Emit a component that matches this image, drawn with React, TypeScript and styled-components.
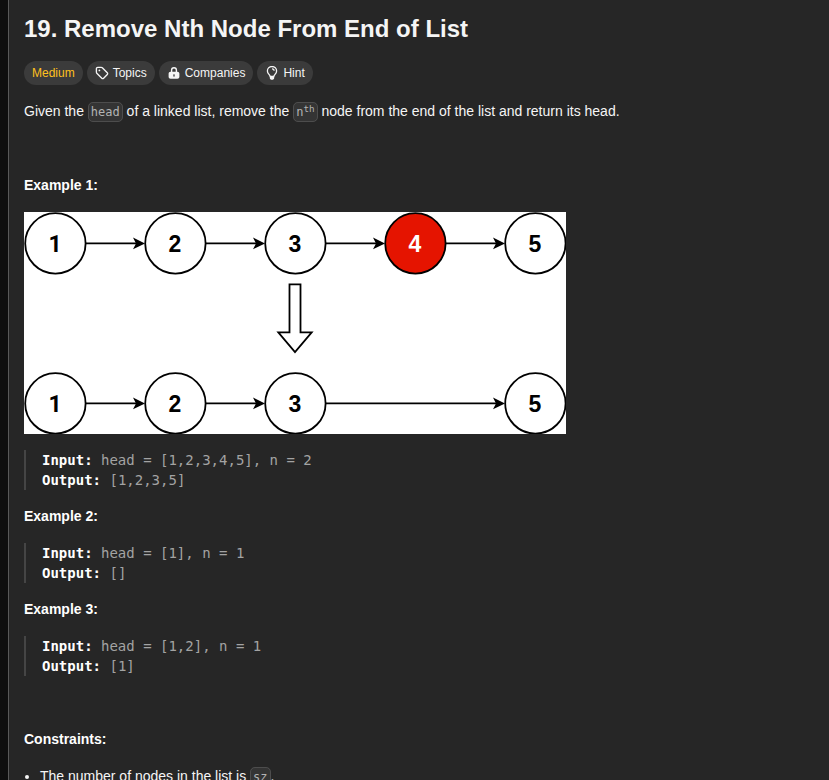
import React from "react";
import styled, { createGlobalStyle } from "styled-components";

const GlobalStyle = createGlobalStyle`
  html, body { margin: 0; height: 100%; overflow: hidden; background: #0f0f0f; }
  *, *::before, *::after { box-sizing: border-box; }
`;

const Page = styled.div`
  display: flex;
  height: 100vh;
  padding-left: 8px;
  overflow: hidden;
  font-family: "Liberation Sans", Arial, sans-serif;
`;

const Panel = styled.main`
  flex: 1;
  min-width: 0;
  overflow: hidden;
  padding: 13px 16px 0 15px;
  border-left: 1px solid #5a5a5a;
  background: #262626;
  color: #f5f5f5;
`;

const Title = styled.h1`
  margin: 0;
  font-size: 24px;
  line-height: 32px;
  font-weight: 700;
`;

const Tags = styled.div`
  display: flex;
  gap: 4px;
  margin-top: 16px;
`;

const Tag = styled.span<{ $color?: string }>`
  display: inline-flex;
  align-items: center;
  gap: 4px;
  height: 24px;
  padding: 0 8px;
  border-radius: 12px;
  background: #3b3b3b;
  color: ${(p) => p.$color ?? "#f5f5f5"};
  font-size: 12px;
  line-height: 16px;
  white-space: nowrap;
`;

const TagIcon = styled.svg`
  width: 14px;
  height: 14px;
  flex: none;
`;

const Paragraph = styled.p`
  margin: 16px 0 0;
  font-size: 14px;
  line-height: 21px;
`;

const Code = styled.code`
  padding: 2px;
  margin: 0;
  border: 1px solid #4d4d4d;
  border-radius: 5px;
  background: #343434;
  color: #b3b3b3;
  font-family: "DejaVu Sans Mono", monospace;
  font-size: 12px;
  line-height: 16px;

  sup {
    position: relative;
    top: -0.42em;
    font-size: 9.3px;
    line-height: 0;
    vertical-align: baseline;
  }
`;

const Heading = styled.p<{ $top: number }>`
  margin: ${(p) => p.$top}px 0 0;
  font-size: 14px;
  line-height: 21px;
  font-weight: 700;
  color: #fff;
`;

const Diagram = styled.svg`
  display: block;
  width: 542px;
  height: 222px;
  margin-top: 16px;
  background: #fff;
`;

const Digit = styled.text<{ $slim: boolean }>`
  font-family: ${(p) => (p.$slim ? "Roboto" : '"Liberation Sans"')}, sans-serif;
  font-size: 23px;
  font-weight: 700;
  text-anchor: middle;
`;

const Sample = styled.pre`
  margin: 16px 0 0;
  padding-left: 16px;
  border-left: 2px solid #454545;
  color: #a3a3a3;
  font-family: "DejaVu Sans Mono", monospace;
  font-size: 14px;
  line-height: 20px;

  strong { color: #fff; }
`;

const List = styled.ul`
  margin: 16px 0 0;
  padding-left: 16px;
  font-size: 14px;
  line-height: 21px;
`;

const ROW_TOP = 31.4;
const ROW_BOTTOM = 191.4;

function ListNode({ x, y, label, removed = false }: { x: number; y: number; label: string; removed?: boolean }) {
  return (
    <g>
      <circle cx={x} cy={y} r={30.2} fill={removed ? "#e51400" : "#fff"} stroke="#000" strokeWidth={1.8} />
      <Digit $slim={label === "1"} x={x - 0.4} y={y + 8.2} fill={removed ? "#fff" : "#000"}>
        {label}
      </Digit>
    </g>
  );
}

function Arrow({ from, to, y }: { from: number; to: number; y: number }) {
  return (
    <g>
      <path d={`M${from} ${y}H${to - 8}`} stroke="#000" strokeWidth={1.8} />
      <path d={`M${to} ${y}l-12 -5.8l3 5.8l-3 5.8z`} fill="#000" />
    </g>
  );
}

function Example({ input, output }: { input: string; output: string }) {
  return (
    <Sample>
      <strong>Input:</strong> {input}
      {"\n"}
      <strong>Output:</strong> {output}
    </Sample>
  );
}

export default function App() {
  return (
    <>
      <GlobalStyle />
      <Page>
        <Panel>
          <Title>19. Remove Nth Node From End of List</Title>
          <Tags>
            <Tag $color="#ffc01e">Medium</Tag>
            <Tag>
              <TagIcon viewBox="0 0 14 14" fill="none" stroke="#f5f5f5" strokeWidth="1.35" strokeLinejoin="round">
                <path d="M1.4 2.8v3.3c0 .4.15.8.4 1.1l5 5c.5.5 1.3.5 1.8 0l3.7-3.7c.5-.5.5-1.3 0-1.8l-5-4.9c-.3-.3-.7-.4-1.1-.4H2.8c-.8 0-1.4.6-1.4 1.4z" />
                <circle cx="4.4" cy="4.4" r=".9" fill="#f5f5f5" stroke="none" />
              </TagIcon>
              Topics
            </Tag>
            <Tag>
              <TagIcon viewBox="0 0 14 14">
                <path d="M4.6 6.5V4.1a2.4 2.4 0 0 1 4.8 0v2.4" fill="none" stroke="#f5f5f5" strokeWidth="1.4" />
                <path
                  fillRule="evenodd"
                  fill="#f5f5f5"
                  d="M3.6 5.8h6.8c1.2 0 2 .8 2 2v3c0 1.2-.8 2-2 2H3.6c-1.2 0-2-.8-2-2v-3c0-1.2.8-2 2-2zM7 8.2a.9.9 0 0 0-.5 1.6v.9h1v-.9A.9.9 0 0 0 7 8.2z"
                />
              </TagIcon>
              Companies
            </Tag>
            <Tag>
              <TagIcon viewBox="0 0 14 14" fill="none" stroke="#f5f5f5" strokeWidth="1.3" strokeLinejoin="round">
                <path d="M5.1 10.4C5 8.6 2.4 7.9 2.4 4.9a4.6 4.4 0 0 1 9.2 0c0 3-2.6 3.7-2.7 5.5z" />
                <path d="M7 2.8c1.3 0 2.1.8 2.1 2" />
                <path d="M4.8 10.8h4.4v1.1c0 1-.9 1.8-2.2 1.8s-2.2-.8-2.2-1.8z" fill="#f5f5f5" stroke="none" />
              </TagIcon>
              Hint
            </Tag>
          </Tags>
          <Paragraph>
            Given the <Code>head</Code> of a linked list, remove the{" "}
            <Code>
              n<sup>th</sup>
            </Code>{" "}
            node from the end of the list and return its head.
          </Paragraph>
          <Heading $top={53}>Example 1:</Heading>
          <Diagram viewBox="0 0 542 222">
            <Arrow from={61} to={121} y={ROW_TOP} />
            <Arrow from={181} to={241} y={ROW_TOP} />
            <Arrow from={301} to={361} y={ROW_TOP} />
            <Arrow from={421} to={481} y={ROW_TOP} />
            <Arrow from={61} to={121} y={ROW_BOTTOM} />
            <Arrow from={181} to={241} y={ROW_BOTTOM} />
            <Arrow from={301} to={481} y={ROW_BOTTOM} />
            {["1", "2", "3", "4", "5"].map((label, i) => (
              <ListNode key={label} x={31.4 + i * 120} y={ROW_TOP} label={label} removed={label === "4"} />
            ))}
            {["1", "2", "3", "5"].map((label) => (
              <ListNode key={label} x={31.4 + (Number(label) - 1) * 120} y={ROW_BOTTOM} label={label} />
            ))}
            <path
              d="M265.5 72.4h11v48h11.2L271 140.2L254.3 120.4h11.2z"
              fill="#fff"
              stroke="#000"
              strokeWidth={1.8}
            />
          </Diagram>
          <Example input="head = [1,2,3,4,5], n = 2" output="[1,2,3,5]" />
          <Heading $top={16}>Example 2:</Heading>
          <Example input="head = [1], n = 1" output="[]" />
          <Heading $top={16}>Example 3:</Heading>
          <Example input="head = [1,2], n = 1" output="[1]" />
          <Heading $top={53}>Constraints:</Heading>
          <List>
            <li>
              The number of nodes in the list is <Code>sz</Code>.
            </li>
          </List>
        </Panel>
      </Page>
    </>
  );
}
